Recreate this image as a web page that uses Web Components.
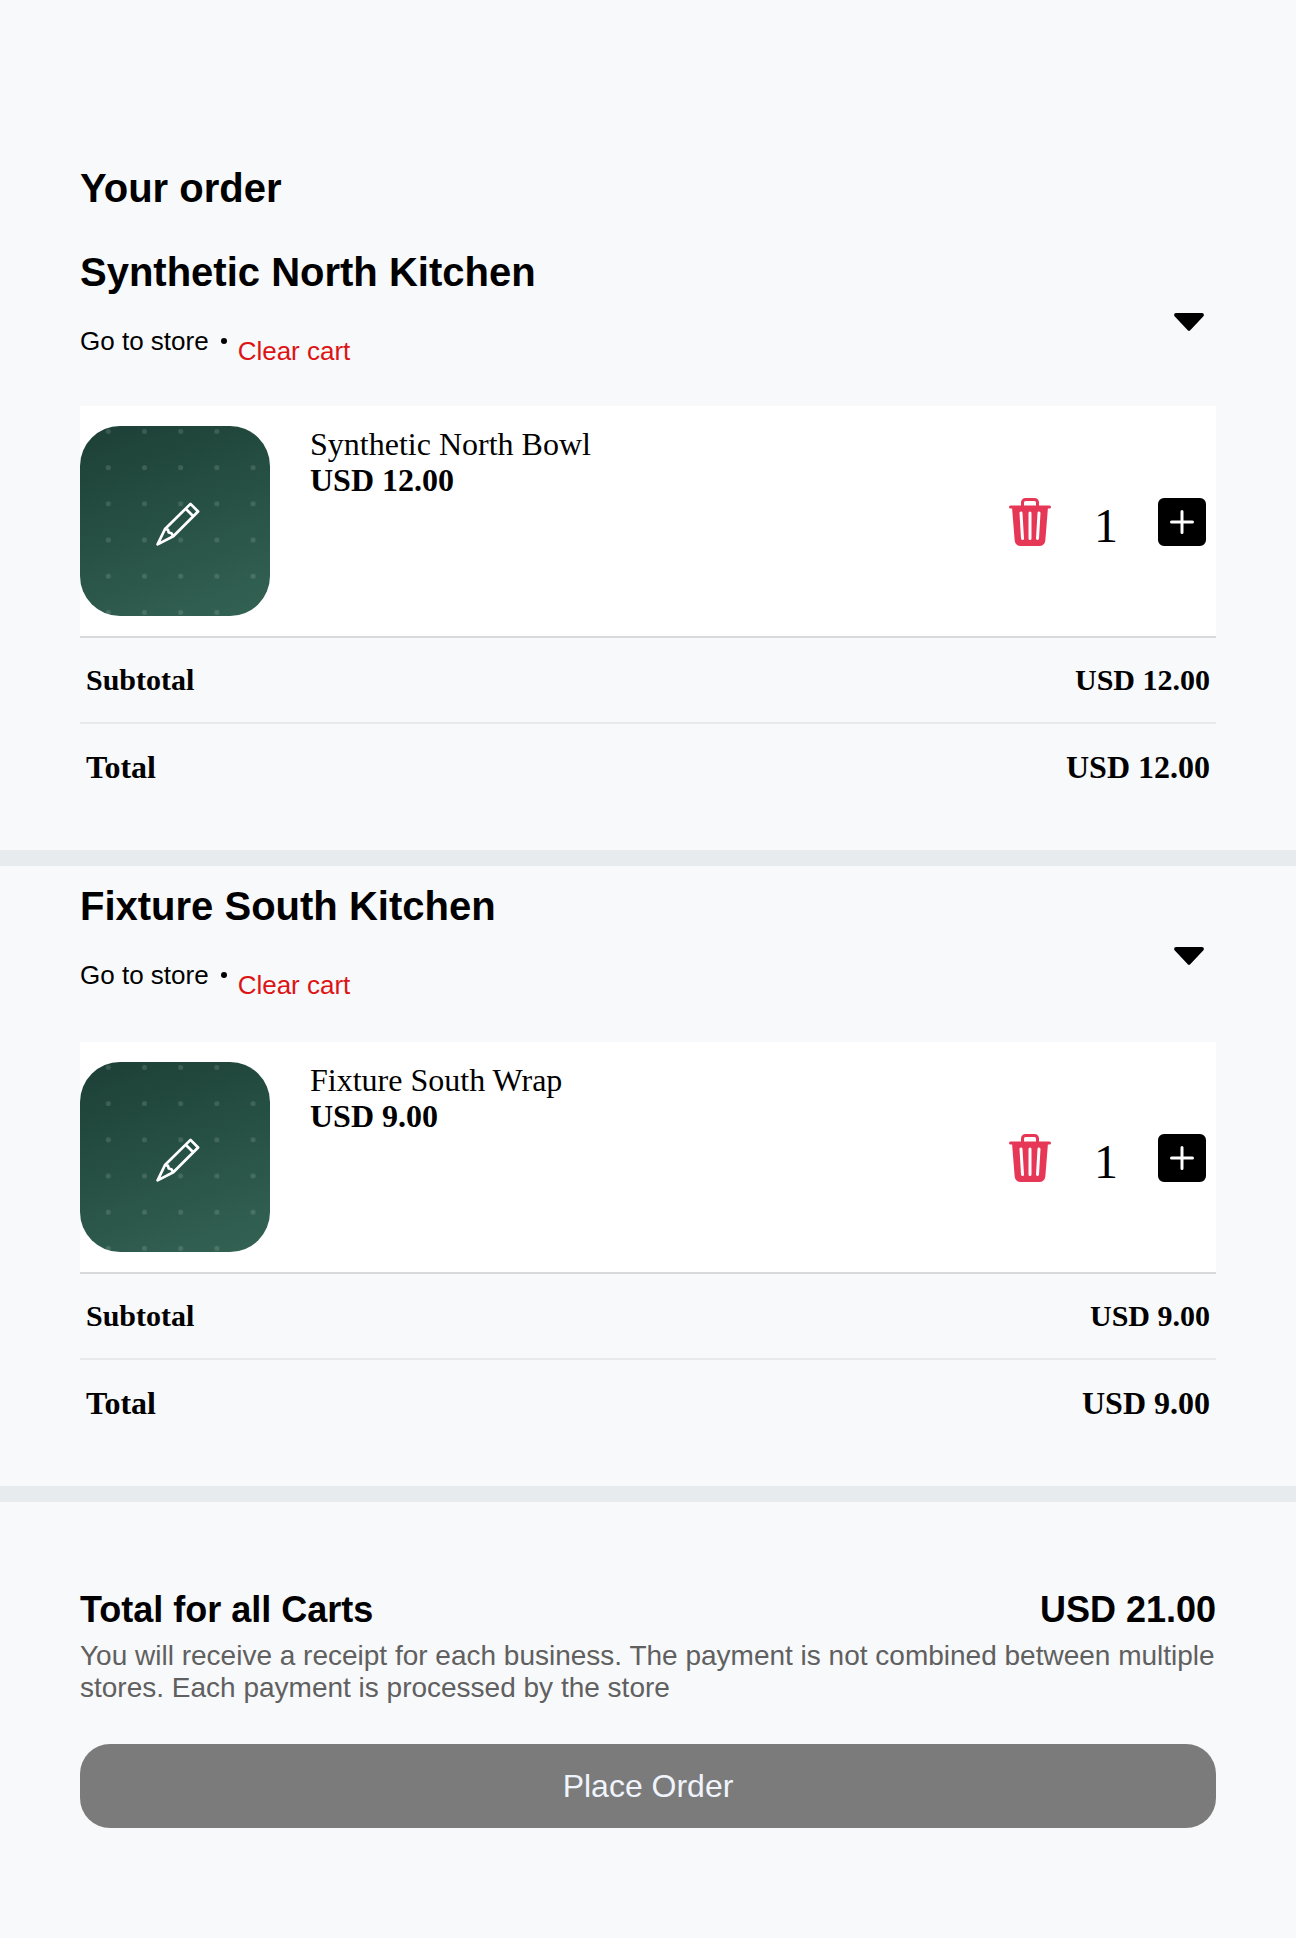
<!DOCTYPE html>
<html lang="en">
<head>
<meta charset="utf-8">
<meta name="viewport" content="width=device-width, initial-scale=1">
<title>Your order</title>
<style>
html { background: #f8f9fb; }
body { margin: 0; color: #000; font-family: "Liberation Serif", "Times New Roman", serif; font-size: 32px; --sans: "Liberation Sans", Arial, sans-serif; }
</style>
</head>
<body>
<checkout-page></checkout-page>
<script>
const define = (name, markup, setup) => {
  const template = document.createElement('template');
  template.innerHTML = markup;
  customElements.define(name, class extends HTMLElement {
    connectedCallback() {
      if (this.shadowRoot) return;
      const root = this.attachShadow({ mode: 'open' });
      root.append(template.content.cloneNode(true));
      if (setup) setup(this, root);
    }
  });
};

// Rounded product picture with an edit pencil in the middle
define('product-thumb', `
<style>
:host { display: block; flex: none; width: 190px; height: 190px; }
button { display: grid; place-items: center; position: relative; width: 100%; height: 100%; padding: 6px 0 0 6px; border: 0; border-radius: 40px; overflow: hidden; background: linear-gradient(160deg, #1c3f36, #336354); color: #fff; cursor: pointer; box-sizing: border-box; }
.dots { position: absolute; inset: 0; width: 100%; height: 100%; }
.pencil { position: relative; width: 44px; height: 44px; }
</style>
<button type="button" aria-label="Edit item">
<svg class="dots" viewBox="0 0 190 190" aria-hidden="true">
<defs><pattern id="dots" width="36.19" height="36.19" x="10.2" y="-12.7" patternUnits="userSpaceOnUse"><circle cx="18.1" cy="18.1" r="2.5" fill="#fff" fill-opacity=".13"/></pattern></defs>
<rect width="190" height="190" fill="url(#dots)"/></svg>
<svg class="pencil" viewBox="0 0 44 44" fill="none" stroke="currentColor" stroke-width="2.7" stroke-linejoin="round" aria-hidden="true"><path d="M34.500 1.900L42.100 9.500L17.300 34.300L1.600 42.400L9 27ZM29.700 6.700L37.300 14.300M9 27L12 27.800L12.700 30.500L15.400 31.200L17.300 34.300"/></svg>
</button>`);

define('quantity-stepper', `
<style>
:host { display: flex; align-items: center; gap: 40px; padding-top: 2px; }
button { display: block; width: 48px; height: 48px; padding: 0; border: 0; background: none; color: #000; cursor: pointer; }
.remove { color: #e63757; }
svg { display: block; width: 100%; height: 100%; }
output { padding-top: 8px; font-size: 48px; line-height: 54px; }
</style>
<button class="remove" type="button" aria-label="Remove item"><svg viewBox="0 0 16 16" fill="currentColor"><path d="M11 1.5v1h3.5a.5.5 0 0 1 0 1h-.538l-.853 10.66A2 2 0 0 1 11.115 16h-6.23a2 2 0 0 1-1.994-1.84L2.038 3.5H1.5a.5.5 0 0 1 0-1H5v-1A1.5 1.5 0 0 1 6.5 0h3A1.5 1.5 0 0 1 11 1.5m-5 0v1h4v-1a.5.5 0 0 0-.5-.5h-3a.5.5 0 0 0-.5.5M4.5 5.029l.5 8.5a.5.5 0 1 0 .998-.06l-.5-8.5a.5.5 0 1 0-.998.06m6.53-.528a.5.5 0 0 0-.528.47l-.5 8.5a.5.5 0 0 0 .998.058l.5-8.5a.5.5 0 0 0-.47-.528M8 4.5a.5.5 0 0 0-.5.5v8.5a.5.5 0 0 0 1 0V5a.5.5 0 0 0-.5-.5"/></svg></button>
<output><slot></slot></output>
<button type="button" aria-label="Add one"><svg viewBox="0 0 16 16" fill="currentColor"><path d="M2 0a2 2 0 0 0-2 2v12a2 2 0 0 0 2 2h12a2 2 0 0 0 2-2V2a2 2 0 0 0-2-2zm6.5 4.5v3h3a.5.5 0 0 1 0 1h-3v3a.5.5 0 0 1-1 0v-3h-3a.5.5 0 0 1 0-1h3v-3a.5.5 0 0 1 1 0"/></svg></button>`);

define('cart-item', `
<style>
:host { display: flex; align-items: center; gap: 40px; padding: 20px 10px 20px 0; background: #fff; border-bottom: 2px solid #d8d9db; }
.info { flex: 1; align-self: stretch; line-height: 36px; }
.price { font-weight: 700; }
</style>
<product-thumb></product-thumb>
<div class="info"><div><slot name="name"></slot></div><div class="price"><slot name="price"></slot></div></div>
<quantity-stepper>1</quantity-stepper>`);

define('price-row', `
<style>
:host { display: flex; justify-content: space-between; padding: 25px 6px; font-weight: 700; line-height: 36px; }
:host([minor]) { font-size: 30px; line-height: 34px; border-bottom: 2px solid #e8e9eb; }
</style>
<slot></slot>
<slot name="amount"></slot>`);

define('store-cart', `
<style>
:host { display: block; border-bottom: 16px solid #e7ebee; padding: 17px 80px 40px; }
header { display: flex; align-items: center; justify-content: space-between; padding-bottom: var(--header-gap, 12px); }
h2 { margin: 0 0 31px; font: 700 40px/46px var(--sans); }
.links { display: flex; align-items: flex-start; font: 26px/30px var(--sans); }
a { color: inherit; text-decoration: none; }
.dot { width: 6px; height: 6px; margin: 12px 11px 0 12px; border-radius: 50%; background: #000; }
.clear { margin-top: 10px; padding: 0 0 28px; border: 0; background: none; color: #dc1414; font: inherit; cursor: pointer; }
.toggle { width: 54px; height: 54px; padding: 0; border: 0; background: none; cursor: pointer; }
.toggle svg { display: block; width: 54px; height: 54px; }
</style>
<header>
<div><h2></h2><div class="links"><a href="#store">Go to store</a><span class="dot"></span><button class="clear" type="button">Clear cart</button></div></div>
<button class="toggle" type="button" aria-label="Collapse cart"><svg viewBox="0 0 54 54" aria-hidden="true"><path d="M14 18H40Q41.900 18 41.900 20Q41.900 20.900 41.200 21.600L28 35.500Q27 36.400 26 35.500L12.800 21.600Q12.100 20.900 12.100 20Q12.100 18 14 18Z"/></svg></button>
</header>
<slot></slot>
<price-row minor>Subtotal<span slot="amount" class="amount"></span></price-row>
<price-row>Total<span slot="amount" class="amount"></span></price-row>`,
(host, root) => {
  root.querySelector('h2').textContent = host.getAttribute('store');
  root.querySelectorAll('.amount').forEach(el => { el.textContent = host.getAttribute('amount'); });
});

define('order-summary', `
<style>
:host { display: block; padding: 87px 80px 110px; font-family: var(--sans); }
.total { display: flex; justify-content: space-between; font-size: 36px; line-height: 42px; font-weight: 700; }
h2 { margin: 0; font: inherit; }
p { margin: 9px 0 40px; color: #606060; font-size: 28px; line-height: 32px; }
button { display: block; width: 100%; padding: 24px; border: 0; border-radius: 30px; background: #7b7b7b; color: #f0f4fc; font: 32px/36px var(--sans); }
</style>
<div class="total"><h2>Total for all Carts</h2><span><slot></slot></span></div>
<p>You will receive a receipt for each business. The payment is not combined between multiple stores. Each payment is processed by the store</p>
<button type="button" disabled>Place Order</button>`);

define('checkout-page', `
<style>
:host { display: block; }
h1 { margin: 0; padding: 165px 80px 21px; font: 700 40px/46px var(--sans); }
store-cart + store-cart { --header-gap: 14px; }
</style>
<main>
<h1>Your order</h1>
<store-cart store="Synthetic North Kitchen" amount="USD 12.00"><cart-item><span slot="name">Synthetic North Bowl</span><span slot="price">USD 12.00</span></cart-item></store-cart>
<store-cart store="Fixture South Kitchen" amount="USD 9.00"><cart-item><span slot="name">Fixture South Wrap</span><span slot="price">USD 9.00</span></cart-item></store-cart>
<order-summary>USD 21.00</order-summary>
</main>`);
</script>
</body>
</html>
